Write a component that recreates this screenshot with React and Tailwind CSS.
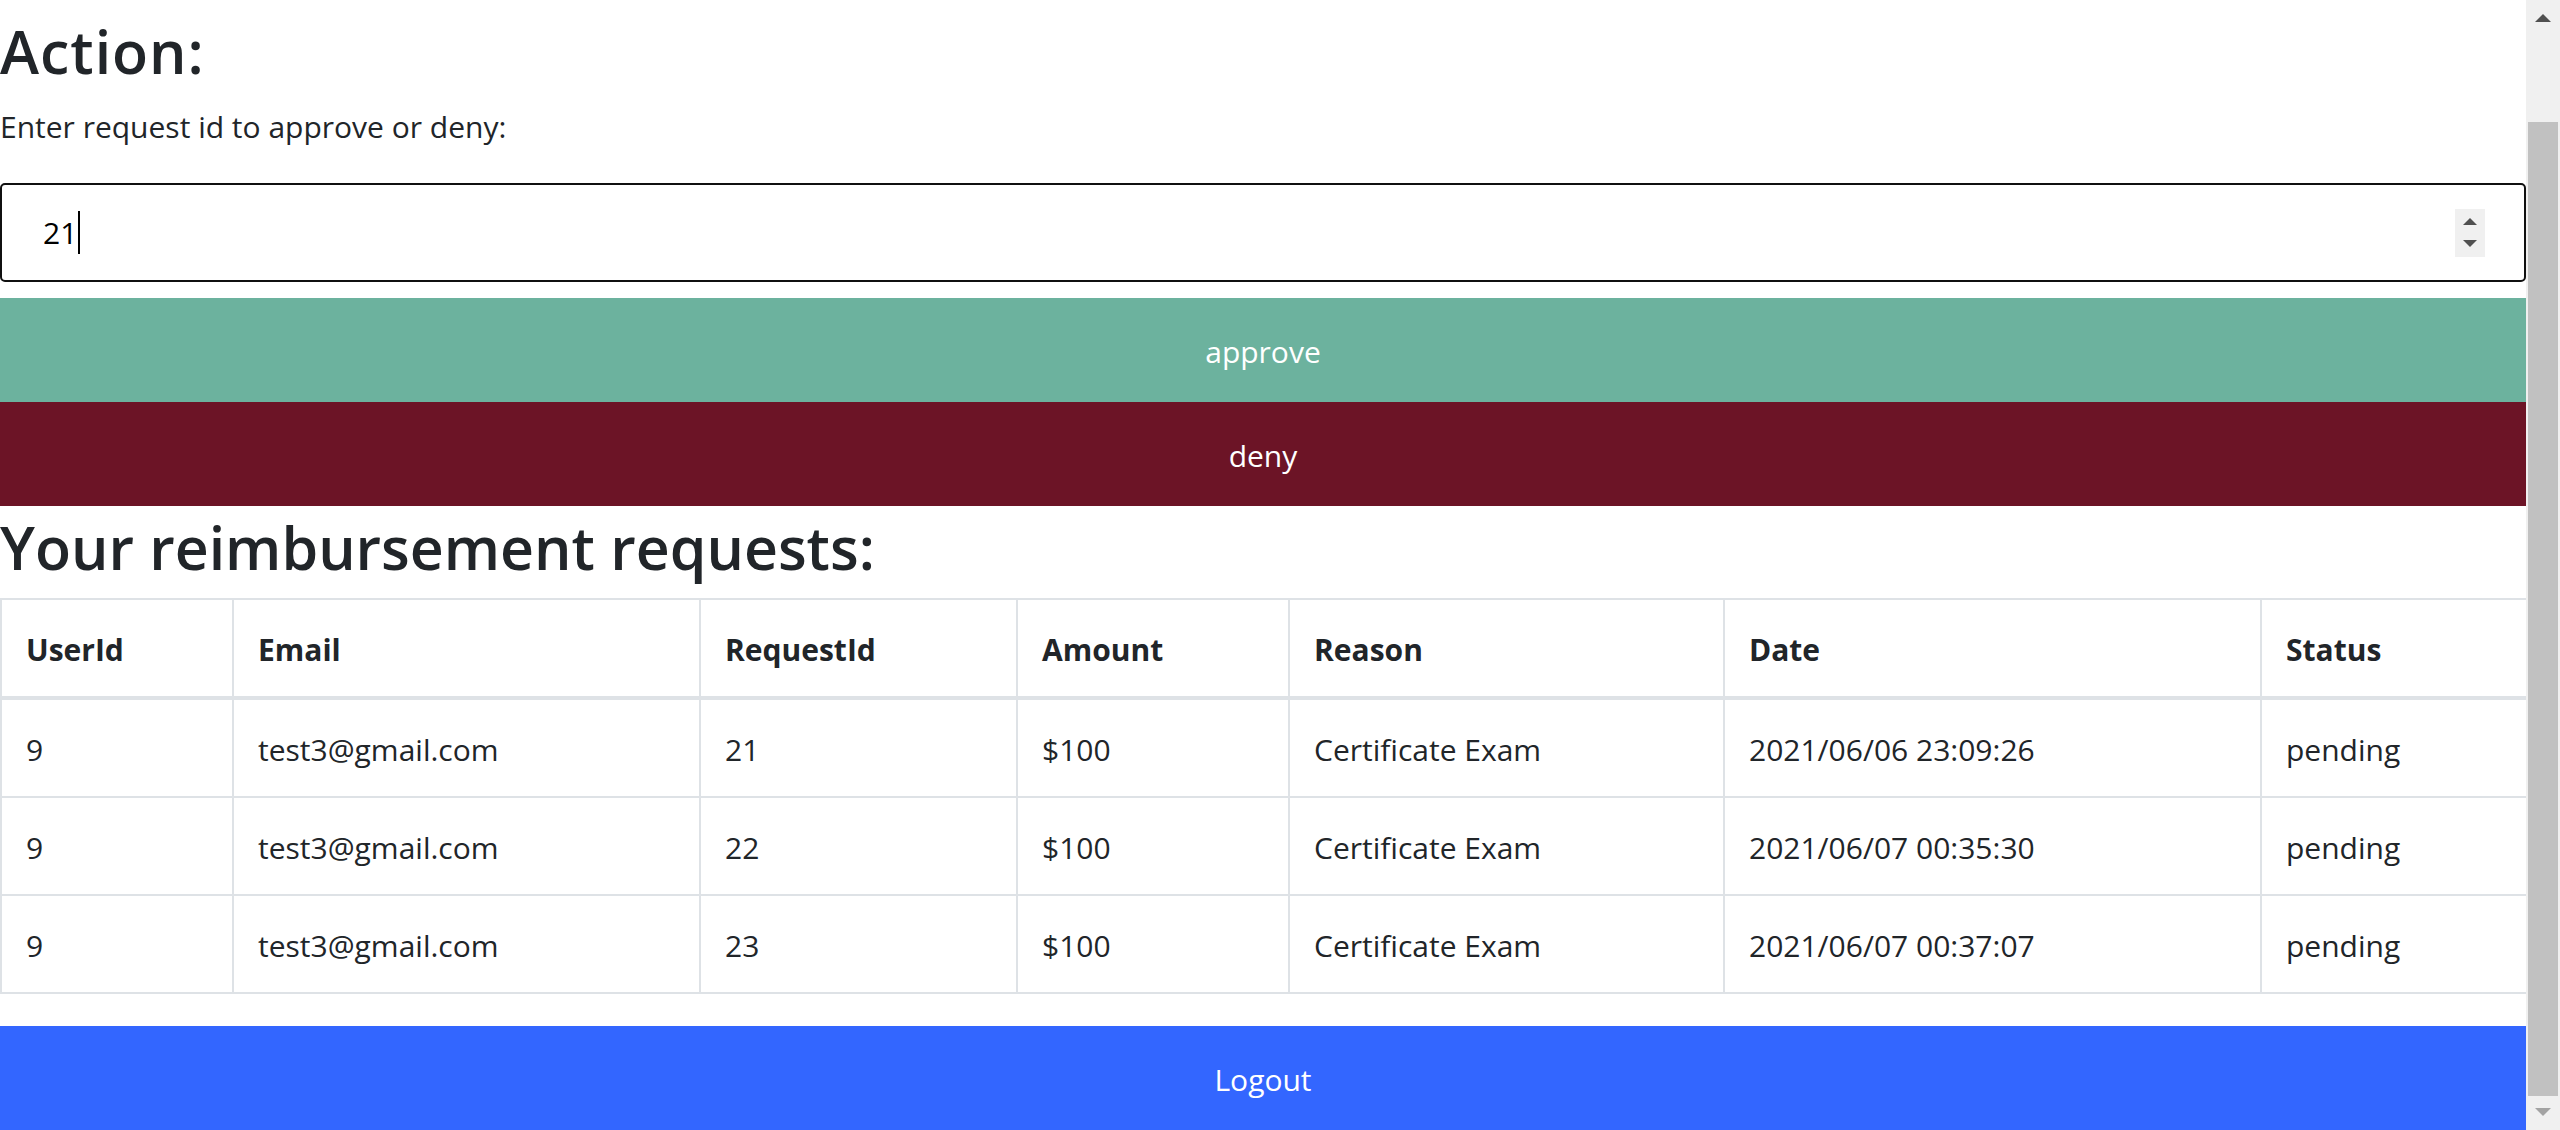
import React from "react";

const headers = ["UserId", "Email", "RequestId", "Amount", "Reason", "Date", "Status"];
const widths = ["w-[232px]", "w-[467px]", "w-[317px]", "w-[272px]", "w-[435px]", "w-[537px]", "w-[266px]"];
const rows = [
  ["9", "test3@gmail.com", "21", "$100", "Certificate Exam", "2021/06/06 23:09:26", "pending"],
  ["9", "test3@gmail.com", "22", "$100", "Certificate Exam", "2021/06/07 00:35:30", "pending"],
  ["9", "test3@gmail.com", "23", "$100", "Certificate Exam", "2021/06/07 00:37:07", "pending"],
];

function Tri({ up, color, w = 16, h = 8 }) {
  return (
    <svg width={w} height={h} viewBox={`0 0 ${w} ${h}`} className="block">
      {up ? (
        <polygon points={`0,${h} ${w / 2},0 ${w},${h}`} fill={color} />
      ) : (
        <polygon points={`0,0 ${w},0 ${w / 2},${h}`} fill={color} />
      )}
    </svg>
  );
}

export default function App() {
  return (
    <div className="flex w-[2560px] h-[1130px] overflow-hidden bg-white font-['Open_Sans',sans-serif] text-[#212529]">
      <div className="w-[2526px] flex flex-col pt-[10px]">
        <h2 className="text-[59px] font-semibold leading-[82px] mb-[10px] tracking-[1px]">Action:</h2>
        <p className="text-[30px] leading-[48px] mb-[32px] pt-[1px] h-[49px]">Enter request id to approve or deny:</p>

        <div className="h-[99px] border-2 border-[#101010] rounded-[5px] flex items-center pl-[41px] pr-[39px]">
          <div className="flex items-center flex-1">
            <span className="text-[30px] leading-[48px] text-black">21</span>
            <span className="w-[2px] h-[43px] bg-black ml-[1px]"></span>
          </div>
          <div className="w-[30px] h-[48px] bg-[#f0f0f0] flex flex-col items-center pt-[9px] gap-[15px]">
            <Tri up color="#505050" w={14} h={7} />
            <Tri color="#505050" w={14} h={7} />
          </div>
        </div>

        <button className="mt-[16px] h-[104px] w-full bg-[#6cb29e] text-white text-[30px] leading-[48px] flex items-center justify-center pt-[3px]">
          approve
        </button>
        <button className="h-[104px] w-full bg-[#6c1426] text-white text-[30px] leading-[48px] flex items-center justify-center pt-[3px]">
          deny
        </button>

        <h2 className="text-[59px] font-semibold leading-[82px] mb-[10px]">Your reimbursement requests:</h2>

        <table className="w-full table-fixed border-collapse text-[30px] leading-[48px] mb-[32px]">
          <colgroup>
            {widths.map((w, i) => (
              <col key={i} className={w} />
            ))}
          </colgroup>
          <thead>
            <tr>
              {headers.map((h) => (
                <th key={h} className="border-2 border-b-4 border-[#dee2e6] px-6 pt-[26px] pb-[22px] text-left font-bold align-top">
                  {h}
                </th>
              ))}
            </tr>
          </thead>
          <tbody>
            {rows.map((r, i) => (
              <tr key={i}>
                {r.map((c, j) => (
                  <td key={j} className="border-2 border-[#dee2e6] px-6 pt-[26px] pb-[22px] text-left align-top whitespace-nowrap">
                    {c}
                  </td>
                ))}
              </tr>
            ))}
          </tbody>
        </table>

        <button className="h-[104px] w-full bg-[#3366ff] text-white text-[30px] leading-[48px] flex items-center justify-center pt-[3px]">
          Logout
        </button>
      </div>

      <div className="w-[34px] h-[1130px] bg-[#f0f0f0] flex flex-col items-center">
        <div className="pt-[14px]">
          <Tri up color="#505050" />
        </div>
        <div className="mt-[100px] w-[30px] h-[974px] bg-[#c1c1c1]"></div>
        <div className="mt-[12px]">
          <Tri color="#a3a3a3" />
        </div>
      </div>
    </div>
  );
}
